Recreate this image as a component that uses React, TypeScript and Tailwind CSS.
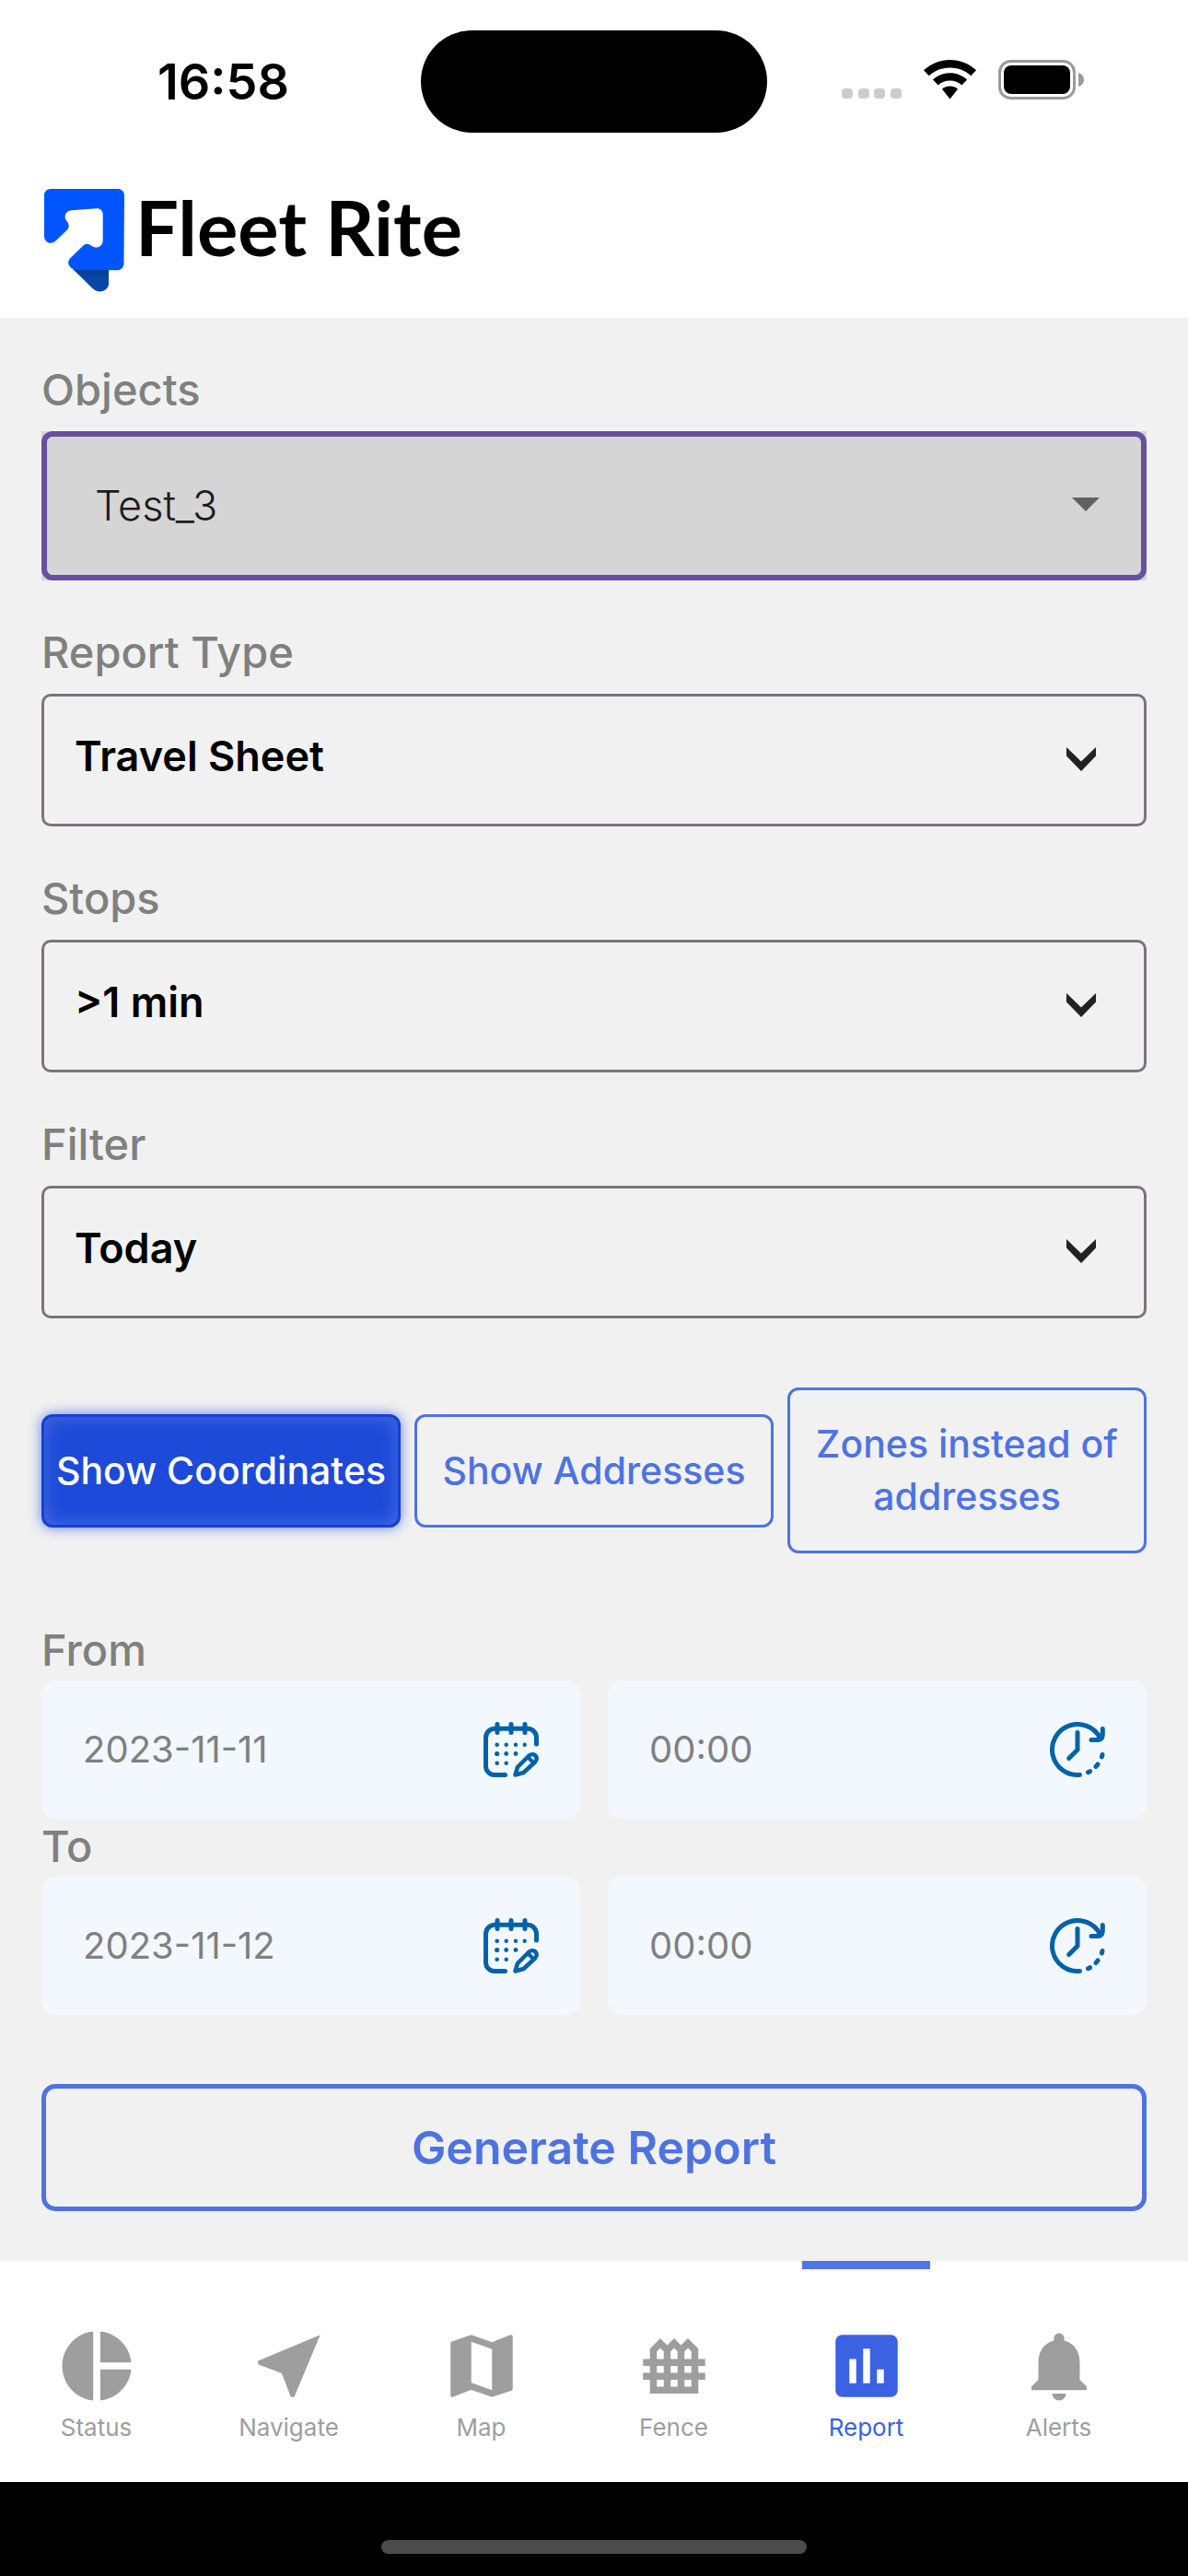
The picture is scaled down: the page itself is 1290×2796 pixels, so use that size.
import { useState } from "react";
import type { ReactNode } from "react";
import {
  MdAssessment,
  MdFence,
  MdMap,
  MdNearMe,
  MdNotifications,
  MdPieChart,
} from "react-icons/md";

const filters = ["Show Coordinates", "Show Addresses", "Zones instead of addresses"];

const tabs = [
  { name: "Status", icon: MdPieChart },
  { name: "Navigate", icon: MdNearMe },
  { name: "Map", icon: MdMap },
  { name: "Fence", icon: MdFence },
  { name: "Report", icon: MdAssessment },
  { name: "Alerts", icon: MdNotifications },
];

function StatusBar() {
  return (
    <div className="grid grid-cols-[1fr_376px_1fr] items-center pt-[33px]">
      <span className="pl-7 text-center text-[54px] leading-[60px] font-semibold">16:58</span>
      <div className="h-[111px] rounded-full bg-black" />
      <div className="flex items-center justify-center gap-6 pr-8 pb-1">
        <svg width="65" height="43" viewBox="0 0 65 43" fill="#ccc" aria-hidden="true">
          <rect x="0" y="31" width="12" height="11" rx="4" />
          <rect x="18" y="31" width="12" height="11" rx="4" />
          <rect x="35" y="31" width="12" height="11" rx="4" />
          <rect x="53" y="31" width="12" height="11" rx="4" />
        </svg>
        <svg width="57" height="43" viewBox="0 0 57 43" aria-hidden="true">
          <path d="M28.500 0C39.500 0 49.500 4.200 57 11.300L51.300 17.200C45.300 11.600 37.300 8.400 28.500 8.400S11.700 11.600 5.700 17.200L0 11.300C7.500 4.200 17.500 0 28.500 0Z" />
          <path d="M28.500 14.200c7.200 0 13.700 2.700 18.600 7.200l-5.800 6c-3.400-3.100-7.900-4.900-12.800-4.900s-9.400 1.800-12.800 4.900l-5.800-6c4.900-4.500 11.400-7.200 18.600-7.200Z" />
          <path d="M28.500 28.500c3.200 0 6.200 1.200 8.500 3.200L28.500 42.500 20 31.700c2.300-2 5.300-3.200 8.500-3.200Z" />
        </svg>
        <svg width="93" height="43" viewBox="0 0 93 43" aria-hidden="true">
          <rect x="1.500" y="1.500" width="81" height="40" rx="12" fill="none" stroke="#9a9a9a" strokeWidth="3" />
          <rect x="6" y="6" width="72" height="31" rx="8" />
          <path d="M87 14c3.500 1 6 4 6 7.500s-2.500 6.500-6 7.500Z" fill="#9a9a9a" />
        </svg>
      </div>
    </div>
  );
}

function Logo() {
  return (
    <div className="flex items-start gap-3">
      <svg width="87" height="112" viewBox="0 0 87 112" aria-hidden="true">
        <defs>
          <linearGradient id="tail" x1="0" y1="0" x2="0" y2="1">
            <stop offset="0" stopColor="#063a86" />
            <stop offset="0.4" stopColor="#0747a6" />
          </linearGradient>
        </defs>
        <path
          d="M31 87H70V103C70 110 60 115 53 108.500Z"
          fill="url(#tail)"
        />
        <path
          d="M7 0H80C84 0 87 3 87 7L86.500 81C86.500 85 83.500 88.300 79 88.300H35C28 87 23.500 81 28 75.500L43 61C46 59 48 59.500 51 61.500C57 66 63.700 62.500 63.700 56V28C63.700 24 61 21.300 57 21.300L30 23.300C24 23.500 21 29 23.500 33.500C26 37 28.500 40 25 44.500L12.700 56.300C7 61.500 0 58 0 51V7C0 3 3 0 7 0Z"
          fill="#0055ff"
        />
      </svg>
      <span className="font-[Lato,sans-serif] text-[83px] leading-[82px] font-bold">
        Fleet Rite
      </span>
    </div>
  );
}

function CalendarIcon() {
  return (
    <svg width="60" height="60" viewBox="0 0 60 60" fill="none" stroke="#0062a8" strokeWidth="5" strokeLinecap="round" strokeLinejoin="round" aria-hidden="true">
      <path d="M23.500 57.500H12A9.500 9.500 0 0 1 2.500 48V17A9.700 9.700 0 0 1 12.200 7.300H48A9.500 9.500 0 0 1 57.500 17V24" />
      <path d="M15 2.500V11.500M30 2.500V11.500M45 2.500V11.500" />
      <path d="M34.500 57.500L37 49L49.500 36.500C55 32.500 60.500 38.500 56 43.500L43.500 55Z" strokeWidth="4.500" />
      <path d="M48.500 38.500L54 44" strokeWidth="4" />
      <g fill="#0062a8" stroke="none">
        <circle cx="14.700" cy="24.700" r="2.300" />
        <circle cx="24.700" cy="24.700" r="2.200" />
        <circle cx="35" cy="24.700" r="2.200" />
        <circle cx="44.700" cy="24.700" r="2.200" />
        <circle cx="14.700" cy="34.500" r="2.600" />
        <circle cx="24.700" cy="34.500" r="2.400" />
        <circle cx="35" cy="34.500" r="2.400" />
        <circle cx="14.700" cy="44.700" r="2.300" />
        <circle cx="24.700" cy="44.700" r="2.200" />
      </g>
    </svg>
  );
}

function ClockIcon() {
  return (
    <svg width="60" height="60" viewBox="0 0 60 60" fill="none" stroke="#0062a8" strokeWidth="5" strokeLinecap="round" strokeLinejoin="round" aria-hidden="true">
      <path d="M32.500 57.400A27.500 27.500 0 1 1 54.500 17.500" />
      <path d="M57.300 7.500V14C57 17.500 56 19.500 52 19.500H45" />
      <path d="M30 11.500V30.300L20.700 39.500" />
      <path d="M57 35.500L56.400 38M52 46L50 48.500M43.500 53.700L41.500 54.700" />
    </svg>
  );
}

type SelectProps = {
  id: string;
  label: string;
  options: string[];
};

function SelectField({ id, label, options }: SelectProps) {
  return (
    <div className="mt-12">
      <label htmlFor={id} className="block text-[47px] leading-[60px] font-medium text-[#808080]">
        {label}
      </label>
      <div className="relative mt-[15px] flex h-36">
        <select
          id={id}
          className="w-full appearance-none rounded-[10px] border-3 border-[#79747e] bg-transparent px-[33px] pb-2 text-[45px] font-semibold text-black"
        >
          {options.map((o) => (
            <option key={o}>{o}</option>
          ))}
        </select>
        <svg width="32" height="26" viewBox="0 0 32 26" className="pointer-events-none absolute top-[58px] right-[55px]" aria-hidden="true">
          <path d="M0 0L16 15.500L32 0V9.500L16 26L0 9.500Z" fill="#222" />
        </svg>
      </div>
    </div>
  );
}

type PickerProps = {
  label: string;
  value: string;
  icon: ReactNode;
};

function Picker({ label, value, icon }: PickerProps) {
  return (
    <div className="flex h-[150px] min-w-0 items-center rounded-[15px] bg-[#f3f8ff] px-[45px]">
      <input
        type="text"
        aria-label={label}
        defaultValue={value}
        className="min-w-0 flex-1 bg-transparent text-[40px] text-[#808080] outline-none"
      />
      <button type="button" aria-label={`Choose ${label}`}>
        {icon}
      </button>
    </div>
  );
}

function DateRow({ label, date, time }: { label: string; date: string; time: string }) {
  return (
    <fieldset>
      <legend className="pb-[3px] text-[47px] leading-[60px] font-medium text-[#808080]">{label}</legend>
      <div className="grid grid-cols-2 gap-[30px]">
        <Picker label={`${label} date`} value={date} icon={<CalendarIcon />} />
        <Picker label={`${label} time`} value={time} icon={<ClockIcon />} />
      </div>
    </fieldset>
  );
}

export default function App() {
  const [selected, setSelected] = useState("Show Coordinates");
  const [active, setActive] = useState("Report");

  return (
    <div className="flex min-h-screen flex-col bg-[#f1f1f1] font-[Inter,'Liberation_Sans',sans-serif] text-black">
      <header className="bg-white pb-7">
        <StatusBar />
        <div className="px-12 pt-[61px]">
          <Logo />
        </div>
      </header>

      <main className="flex-1 px-[45px] pt-12">
        {/* Focused object picker */}
        <label htmlFor="objects" className="block text-[47px] leading-[60px] font-medium text-[#808080]">
          Objects
        </label>
        <div className="relative mt-[15px] flex h-[162px] bg-[#d5d5d5]">
          <select
            id="objects"
            className="w-full appearance-none rounded-xl border-6 border-[#6750a4] bg-transparent px-[52px] text-[45px] font-light text-[#1d1b20] outline-none"
          >
            <option>Test_3</option>
          </select>
          <svg width="30" height="15" viewBox="0 0 30 15" className="pointer-events-none absolute top-[72px] right-[51px]" aria-hidden="true">
            <path d="M0 0H30L15 15Z" fill="#616161" />
          </svg>
        </div>

        <SelectField id="report-type" label="Report Type" options={["Travel Sheet"]} />
        <SelectField id="stops" label="Stops" options={[">1 min"]} />
        <SelectField id="filter" label="Filter" options={["Today"]} />

        <div className="mt-[75px] grid grid-cols-3 items-center gap-[15px]">
          {filters.map((f) => (
            <button
              key={f}
              type="button"
              aria-pressed={selected === f}
              onClick={() => setSelected(f)}
              className={
                selected === f
                  ? "rounded-xl border-3 border-[#1340d8] bg-[#1d4ad8] py-[30px] text-[41px] leading-[57px] font-medium text-white shadow-[0_0_14px_rgba(60,95,225,0.8),inset_0_0_20px_rgba(255,255,255,0.2)]"
                  : "rounded-xl border-3 border-[#4e73e1] py-[30px] text-[41px] leading-[57px] font-medium text-[#4e73e1]"
              }
            >
              {f}
            </button>
          ))}
        </div>

        <div className="mt-[75px] flex flex-col">
          <DateRow label="From" date="2023-11-11" time="00:00" />
          <DateRow label="To" date="2023-11-12" time="00:00" />
        </div>

        <button
          type="button"
          className="mt-[75px] mb-[54px] h-[138px] w-full rounded-[15px] border-5 border-[#4e73e1] text-[50px] font-semibold text-[#4e73e1]"
        >
          Generate Report
        </button>
      </main>

      <nav className="grid h-[240px] grid-cols-6 bg-white pr-9">
        {tabs.map(({ name, icon: Icon }) => (
          <button
            key={name}
            type="button"
            onClick={() => setActive(name)}
            className={
              active === name
                ? "flex flex-col items-center text-[#3a62e3]"
                : "flex flex-col items-center text-[#9e9e9e]"
            }
          >
            <span className={active === name ? "h-[9px] w-2/3 bg-[#5275e6]" : "h-[9px] w-2/3"} />
            <Icon className="mt-15 size-[90px]" />
            <span className="mt-1 text-[26px] leading-[36px]">{name}</span>
          </button>
        ))}
      </nav>

      <footer className="flex h-[102px] items-end justify-center bg-black pb-6">
        <div className="h-[15px] w-[462px] rounded-full bg-[#4b4b4b]" />
      </footer>
    </div>
  );
}
